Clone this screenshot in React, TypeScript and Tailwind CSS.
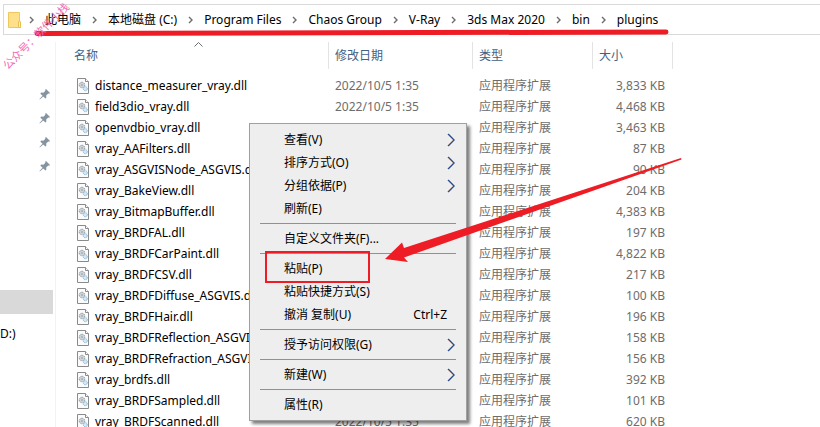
import React from "react";

const FONT = "font-['Noto_Sans','Noto_Sans_CJK_SC',sans-serif]";

const crumbs = ["此电脑", "本地磁盘 (C:)", "Program Files", "Chaos Group", "V-Ray", "3ds Max 2020", "bin", "plugins"];

const files: [string, string][] = [
  ["distance_measurer_vray.dll", "3,833 KB"],
  ["field3dio_vray.dll", "4,468 KB"],
  ["openvdbio_vray.dll", "3,463 KB"],
  ["vray_AAFilters.dll", "87 KB"],
  ["vray_ASGVISNode_ASGVIS.dll", "90 KB"],
  ["vray_BakeView.dll", "204 KB"],
  ["vray_BitmapBuffer.dll", "4,383 KB"],
  ["vray_BRDFAL.dll", "197 KB"],
  ["vray_BRDFCarPaint.dll", "4,822 KB"],
  ["vray_BRDFCSV.dll", "217 KB"],
  ["vray_BRDFDiffuse_ASGVIS.dll", "100 KB"],
  ["vray_BRDFHair.dll", "196 KB"],
  ["vray_BRDFReflection_ASGVIS.dll", "158 KB"],
  ["vray_BRDFRefraction_ASGVIS.dll", "156 KB"],
  ["vray_brdfs.dll", "392 KB"],
  ["vray_BRDFSampled.dll", "101 KB"],
  ["vray_BRDFScanned.dll", "620 KB"],
];

type MenuItem = { label: string; sub?: boolean; keys?: string; marked?: boolean };

const groups: MenuItem[][] = [
  [
    { label: "查看(V)", sub: true },
    { label: "排序方式(O)", sub: true },
    { label: "分组依据(P)", sub: true },
    { label: "刷新(E)" },
  ],
  [{ label: "自定义文件夹(F)..." }],
  [
    { label: "粘贴(P)", marked: true },
    { label: "粘贴快捷方式(S)" },
    { label: "撤消 复制(U)", keys: "Ctrl+Z" },
  ],
  [{ label: "授予访问权限(G)", sub: true }],
  [{ label: "新建(W)", sub: true }],
  [{ label: "属性(R)" }],
];

function FolderIcon() {
  return (
    <svg width="14" height="16" viewBox="0 0 14 16" className="-mr-1 shrink-0">
      <path d="M.5.5h11v9l1 1v5H.5z" fill="#ffe08a" stroke="#efc75c" />
      <path d="M10.5 10v5.500h2V10l-1-1.200z" fill="#fff0b8" stroke="#e8bf52" />
    </svg>
  );
}

function DllIcon() {
  return (
    <svg width="12" height="16" viewBox="0 0 12 16" className="shrink-0">
      <path d="M.5.5h8l3 3v12H.5z" fill="#fbfbfb" stroke="#8a8a8a" />
      <path d="M8.500.5v3h3" fill="#fff" stroke="#8a8a8a" />
      <circle cx="5" cy="7" r="2.700" fill="#dfe3e6" stroke="#7f8b94" strokeDasharray="1.200 .6" />
      <circle cx="5" cy="7" r="1" fill="#fff" stroke="#7f8b94" strokeWidth=".7" />
      <circle cx="8.300" cy="10.700" r="2" fill="#d3e9f8" stroke="#7fb2d6" strokeDasharray="1 .5" />
    </svg>
  );
}

function PinIcon() {
  return (
    <svg width="12" height="12" viewBox="0 0 12 12">
      <path
        d="M7 1l4 4-.8.8-1-.2-2 2 .1 2.100-.9.900L4.200 8.400.8 11.400l-.3-.3 3-3.400L1.300 5.500l.9-.9 2.200.2 2-2L6.200 1.800z"
        fill="#8494a1"
      />
    </svg>
  );
}

function Sidebar() {
  return (
    <aside className="w-[53px] shrink-0 overflow-hidden pt-[47px]">
      {[0, 1, 2, 3].map((i) => (
        <div key={i} className="flex h-6 items-center justify-end pr-0.5">
          <PinIcon />
        </div>
      ))}
      <div className="mt-28 h-6 bg-[#d9d9d9]" />
      <div className="mt-2 flex h-6 items-center text-xs">D:)</div>
    </aside>
  );
}

const th = "border-r border-[#e3e3e3] p-0 pl-1.5 text-left font-normal text-[#44607f]";

function FileTable() {
  return (
    <table className="w-[616px] table-fixed border-separate border-spacing-0 text-xs">
      <colgroup>
        <col className="w-[273px]" />
        <col className="w-36" />
        <col className="w-[120px]" />
        <col className="w-20" />
      </colgroup>
      <thead>
        <tr className="h-[27px]">
          <th className="relative border-r border-[#e3e3e3] p-0 pl-[18px] text-left font-normal text-[#44607f]">
            名称
            <svg width="9" height="5" viewBox="0 0 9 5" className="absolute left-[138px] top-0">
              <path d="M.5 4.500l4-4 4 4" fill="none" stroke="#6d6d6d" />
            </svg>
          </th>
          <th className={th}>修改日期</th>
          <th className={th}>类型</th>
          <th className={th}>大小</th>
        </tr>
      </thead>
      <tbody className="whitespace-nowrap text-[#6d6d6d]">
        <tr className="h-[6px]" />
        {files.map(([name, size]) => (
          <tr key={name} className="h-[21px]">
            <td className="overflow-hidden p-0 pl-[21px] text-black">
              <span className="flex items-center gap-1.5">
                <DllIcon />
                {name}
              </span>
            </td>
            <td className="p-0 pl-1.5">2022/10/5 1:35</td>
            <td className="p-0 pl-1.5">应用程序扩展</td>
            <td className="p-0 pr-2 text-right">{size}</td>
          </tr>
        ))}
      </tbody>
    </table>
  );
}

function SubmenuArrow() {
  return (
    <svg width="8" height="14" viewBox="0 0 8 14" fill="none">
      <path d="M.5 1l6 6-6 6" stroke="#e0a060" />
      <path d="M1.200 1l6 6-6 6" stroke="#23488f" strokeWidth="1.100" />
    </svg>
  );
}

function ContextMenu() {
  return (
    <div
      role="menu"
      className="absolute left-[249px] top-[123px] w-[218px] border border-[#a0a0a0] bg-[#eeeeee] py-1 text-xs text-black shadow-[3px_3px_3px_rgba(0,0,0,0.5)]"
    >
      {groups.map((items, g) => (
        <div key={g}>
          {g > 0 && <div className="mx-2.5 my-[3px] h-px bg-[#919191]" />}
          {items.map((item) => (
            <button
              key={item.label}
              role="menuitem"
              className="relative flex h-[23px] w-full items-center justify-between pl-[34px] pr-[11px] text-left"
            >
              <span>{item.label}</span>
              {item.keys && <span className="pr-2">{item.keys}</span>}
              {item.sub && <SubmenuArrow />}
              {item.marked && (
                <span className="absolute -top-1.5 left-[15px] h-8 w-[105px] border-2 border-[#ee1c25]" />
              )}
            </button>
          ))}
        </div>
      ))}
    </div>
  );
}

export default function App() {
  return (
    <div className={`relative h-screen overflow-hidden bg-white ${FONT}`}>
      <nav className="ml-[3px] mt-1 flex h-[31px] items-center border border-r-0 border-[#d9d9d9] pl-1 text-xs text-black">
        <FolderIcon />
        {crumbs.map((c) => (
          <React.Fragment key={c}>
            <svg width="5" height="8" viewBox="0 0 5 8" className="mx-[11px] shrink-0">
              <path d="M1 1l3 3-3 3" fill="none" stroke="#6d6d6d" strokeWidth="1.400" />
            </svg>
            <a href="#" className="whitespace-nowrap">{c}</a>
          </React.Fragment>
        ))}
      </nav>
      <div className="flex">
        <Sidebar />
        <main className="ml-[2px] mt-[7px] min-w-0 flex-1 border-l border-[#f2f2f2]">
          <FileTable />
        </main>
      </div>
      <ContextMenu />
      <svg className="pointer-events-none absolute left-0 top-0" width="820" height="427" viewBox="0 0 820 427">
        <path d="M37 33.500L666 32" stroke="#ee1c25" strokeWidth="5" strokeLinecap="round" />
        <path d="M385 259L402 242.500l2 5.500L681 158l.5 1.500L404 257.500l4 4.500z" fill="#ee1c25" />
      </svg>
      <span className="pointer-events-none absolute -left-2 top-7 -rotate-45 whitespace-nowrap text-[11px] leading-4 text-[#f56bb5]">
        公众号：软件小栈
      </span>
    </div>
  );
}
